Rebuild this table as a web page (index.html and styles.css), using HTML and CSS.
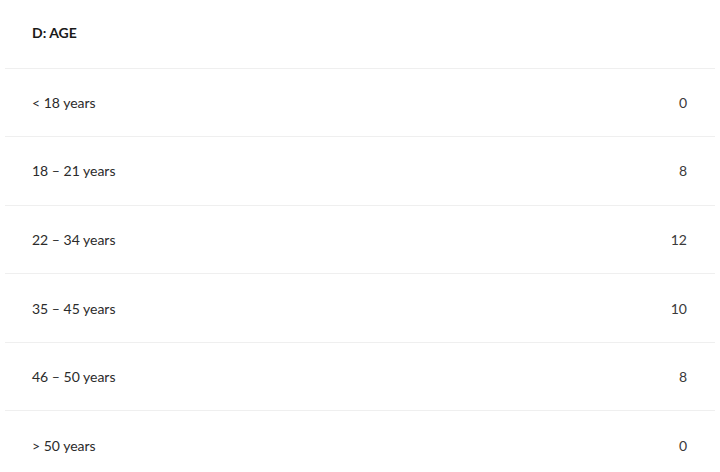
FILE: index.html
```html
<!DOCTYPE html>
<html lang="en">
<head>
    <meta charset="UTF-8">
    <meta name="viewport" content="width=device-width, initial-scale=1.0">
    <title>D: Age</title>
    <link rel="stylesheet" href="styles.css">
</head>
<body>
    <div class="table">
        <div class="row head">
            <span class="label">D: AGE</span>
        </div>
        <div class="row">
            <span class="label">&lt; 18 years</span>
            <span class="count">0</span>
        </div>
        <div class="row">
            <span class="label">18 – 21 years</span>
            <span class="count">8</span>
        </div>
        <div class="row">
            <span class="label">22 – 34 years</span>
            <span class="count">12</span>
        </div>
        <div class="row">
            <span class="label">35 – 45 years</span>
            <span class="count">10</span>
        </div>
        <div class="row">
            <span class="label">46 – 50 years</span>
            <span class="count">8</span>
        </div>
        <div class="row last">
            <span class="label">&gt; 50 years</span>
            <span class="count">0</span>
        </div>
    </div>
</body>
</html>
```

FILE: styles.css
```css
body {
    font-family: Lato, "Open Sans", sans-serif;
    font-size: 14px;
    color: #2b2b2b;
    background-color: #ffffff;
    margin: 0;
    padding: 0;
}
.table {
    padding: 0 5px;
}
.row {
    display: flex;
    justify-content: space-between;
    align-items: center;
    height: 67.6px;
    padding: 0 28px 0 27px;
    border-bottom: 1px solid #efefef;
}
.count {
    color: #3a3a3a;
}
.head {
    box-sizing: border-box;
    height: 68.5px;
    padding-bottom: 3px;
    font-weight: bold;
    color: #1a1a1a;
}
.last {
    border-bottom: none;
}
```
